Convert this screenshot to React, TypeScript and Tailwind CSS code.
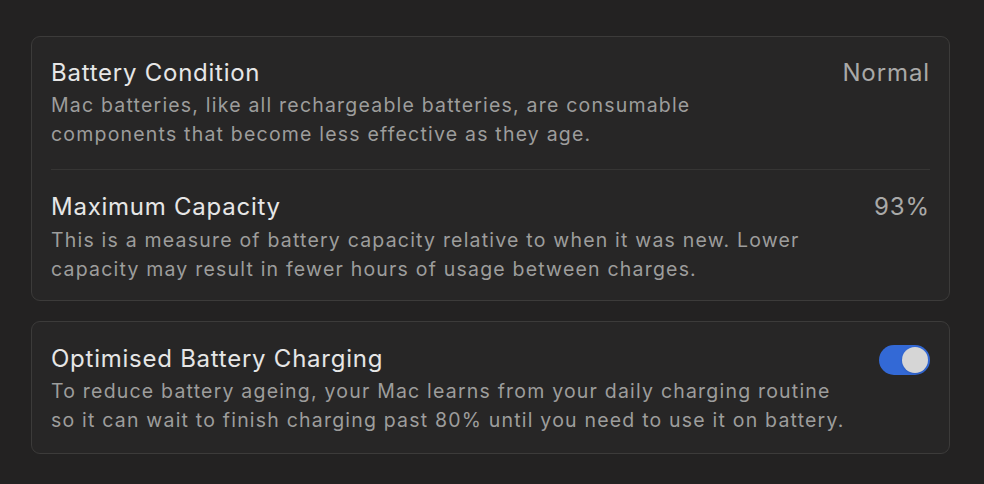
import { useState } from 'react';

function Toggle({ on, onChange }: { on: boolean; onChange: (v: boolean) => void }) {
  return (
    <button
      onClick={() => onChange(!on)}
      className={`relative flex items-center w-[51px] h-[30px] rounded-full shrink-0 px-[2px] ${on ? 'bg-[#3369d6] justify-end' : 'bg-[#4a4948] justify-start'}`}
    >
      <span className="w-[26px] h-[26px] rounded-full bg-[#d6d6d6] shadow-sm" />
    </button>
  );
}

export default function App() {
  const [optimised, setOptimised] = useState(true);

  const title = 'text-[24px] leading-[30px] tracking-[0.75px] text-[#e6e6e6]';
  const desc = 'text-[19.5px] leading-[28.5px] tracking-[1.2px] text-[#9d9d9c] whitespace-nowrap';
  const value = 'text-[24px] leading-[30px] tracking-[0.9px] text-[#a9a9a8]';

  return (
    <div
      className="w-[984px] h-[484px] bg-[#232222] pl-[31px] pt-[36px]"
      style={{ fontFamily: 'Inter, "Noto Sans", sans-serif' }}
    >
      {/* Battery health */}
      <div className="w-[919px] rounded-[9px] border border-[#3c3b3a] bg-[#272626] px-[19px]">
        <div className="flex justify-between pt-[21px] pb-[21px] border-b border-[#363534]">
          <div>
            <div className={title}>Battery Condition</div>
            <div className={`mt-[3px] ${desc}`}>
              Mac batteries, like all rechargeable batteries, are consumable
              <br />
              components that become less effective as they age.
            </div>
          </div>
          <div className={value}>Normal</div>
        </div>
        <div className="flex justify-between pt-[22px] pb-[17px]">
          <div>
            <div className={title}>Maximum Capacity</div>
            <div className={`mt-[4px] ${desc}`}>
              This is a measure of battery capacity relative to when it was new. Lower
              <br />
              capacity may result in fewer hours of usage between charges.
            </div>
          </div>
          <div className={value}>93%</div>
        </div>
      </div>

      {/* Optimised charging */}
      <div className="mt-[20px] w-[919px] rounded-[9px] border border-[#3c3b3a] bg-[#272626] px-[19px] pt-[22px] pb-[19px] flex justify-between">
        <div>
          <div className={title}>Optimised Battery Charging</div>
          <div className={`mt-[3px] ${desc}`}>
            To reduce battery ageing, your Mac learns from your daily charging routine
            <br />
            so it can wait to finish charging past 80% until you need to use it on battery.
          </div>
        </div>
        <div className="pt-[1px]">
          <Toggle on={optimised} onChange={setOptimised} />
        </div>
      </div>
    </div>
  );
}
